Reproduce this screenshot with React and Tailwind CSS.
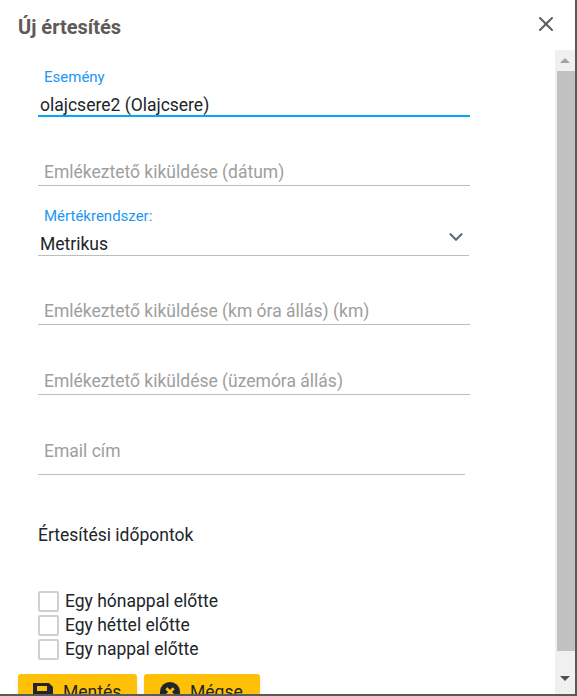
import { X, ChevronDown } from "lucide-react";

function EmptyField({ label, width = "w-[432px]", height = "h-[70px]", pb = "pb-0" }) {
  return (
    <div className={`${width} ${height} flex flex-col justify-end border-b border-[#bdbdbd]`}>
      <span className={`pl-1.5 text-[17.5px] leading-[26px] text-[#9e9e9e] ${pb}`}>{label}</span>
    </div>
  );
}

function Check({ label }) {
  return (
    <label className="flex h-6 items-center gap-[6px]">
      <span className="h-[21px] w-[21px] rounded-[2px] border-2 border-[#d0d0d0] bg-white" />
      <span className="text-[17.5px] leading-6 text-[#212529]">{label}</span>
    </label>
  );
}

export default function App() {
  return (
    <div className="flex h-[696px] w-[577px] flex-col overflow-hidden border-r-2 border-b-2 border-[#5a5a5a] bg-white font-['Roboto',sans-serif]">
      {/* Header */}
      <div className="flex h-[50px] shrink-0 items-center justify-between pl-[18px] pr-[17px] pt-[3px]">
        <h2 className="text-[20px] font-bold leading-6 text-[#5f5a55]">Új értesítés</h2>
        <X className="mb-[5px] h-6 w-6 text-[#5f5a55]" strokeWidth={2} />
      </div>

      <div className="flex min-h-0 flex-1">
        <div className="min-w-0 flex-1 pl-[38px]">
          {/* Esemény */}
          <div className="h-[67px] w-[432px] border-b-2 border-[#03a9f4]">
            <div className="pl-1.5 pt-[18px] text-[15px] leading-[18px] text-[#2196f3]">Esemény</div>
            <div className="pl-[2px] pt-[7px] text-[17.5px] leading-[24px] text-[#212529]">olajcsere2 (Olajcsere)</div>
          </div>

          <EmptyField label="Emlékeztető kiküldése (dátum)" height="h-[69px]" />

          {/* Mértékrendszer */}
          <div className="relative h-[70px] w-[431px] border-b border-[#bdbdbd]">
            <div className="pl-1.5 pt-[21px] text-[15px] leading-[18px] text-[#2196f3]">Mértékrendszer:</div>
            <div className="pl-[2px] pt-[7px] text-[17.5px] leading-[24px] text-[#212529]">Metrikus</div>
            <ChevronDown className="absolute right-[2px] top-[40px] h-[22px] w-[22px] text-[#5f6b75]" strokeWidth={2.4} />
          </div>

          <EmptyField label="Emlékeztető kiküldése (km óra állás) (km)" height="h-[69px]" />
          <EmptyField label="Emlékeztető kiküldése (üzemóra állás)" height="h-[70px]" />
          <EmptyField label="Email cím" width="w-[427px]" height="h-[80px]" pb="pb-[10px]" />

          <div className="pt-[48px] text-[17.5px] leading-6 text-[#212529]">Értesítési időpontok</div>

          <div className="mt-[42px] flex flex-col">
            <Check label="Egy hónappal előtte" />
            <Check label="Egy héttel előtte" />
            <Check label="Egy nappal előtte" />
          </div>

          {/* Actions */}
          <div className="-ml-5 mt-[13px] flex gap-[7px]">
            <button className="flex h-9 w-[119px] items-center gap-2 rounded-[3px] bg-[#ffc107] pl-[13px] text-[17.5px] text-[#212529] shadow-md">
              <svg viewBox="0 0 24 24" className="mt-[1px] h-[24px] w-[24px]" fill="#212529">
                <path d="M2 2h16l4 4v16H2z M6 5v5h10V5z M12 13a3.5 3.5 0 1 0 0 7a3.5 3.5 0 0 0 0-7z" fillRule="evenodd" />
              </svg>
              Mentés
            </button>
            <button className="flex h-9 w-[116px] items-center gap-[9px] rounded-[3px] bg-[#ffc107] pl-[15px] text-[17.5px] text-[#212529] shadow-md">
              <svg viewBox="0 0 24 24" className="h-[22px] w-[22px]">
                <circle cx="12" cy="12" r="11" fill="#212529" />
                <path d="M8 8l8 8M16 8l-8 8" stroke="#ffc107" strokeWidth="3" />
              </svg>
              Mégse
            </button>
          </div>
        </div>

        {/* Scrollbar */}
        <div className="flex w-5 shrink-0 flex-col items-end bg-[#f0f0f0]">
          <div className="flex h-[21px] w-full items-center justify-center">
            <span className="h-0 w-0 border-x-[5px] border-b-[5px] border-x-transparent border-b-[#a3a3a3]" />
          </div>
          <div className="h-[580px] w-[18px] bg-[#c1c1c1]" />
          <div className="flex w-full flex-1 items-center justify-center pt-[11px]">
            <span className="h-0 w-0 border-x-[5px] border-t-[5px] border-x-transparent border-t-[#505050]" />
          </div>
        </div>
      </div>
    </div>
  );
}
